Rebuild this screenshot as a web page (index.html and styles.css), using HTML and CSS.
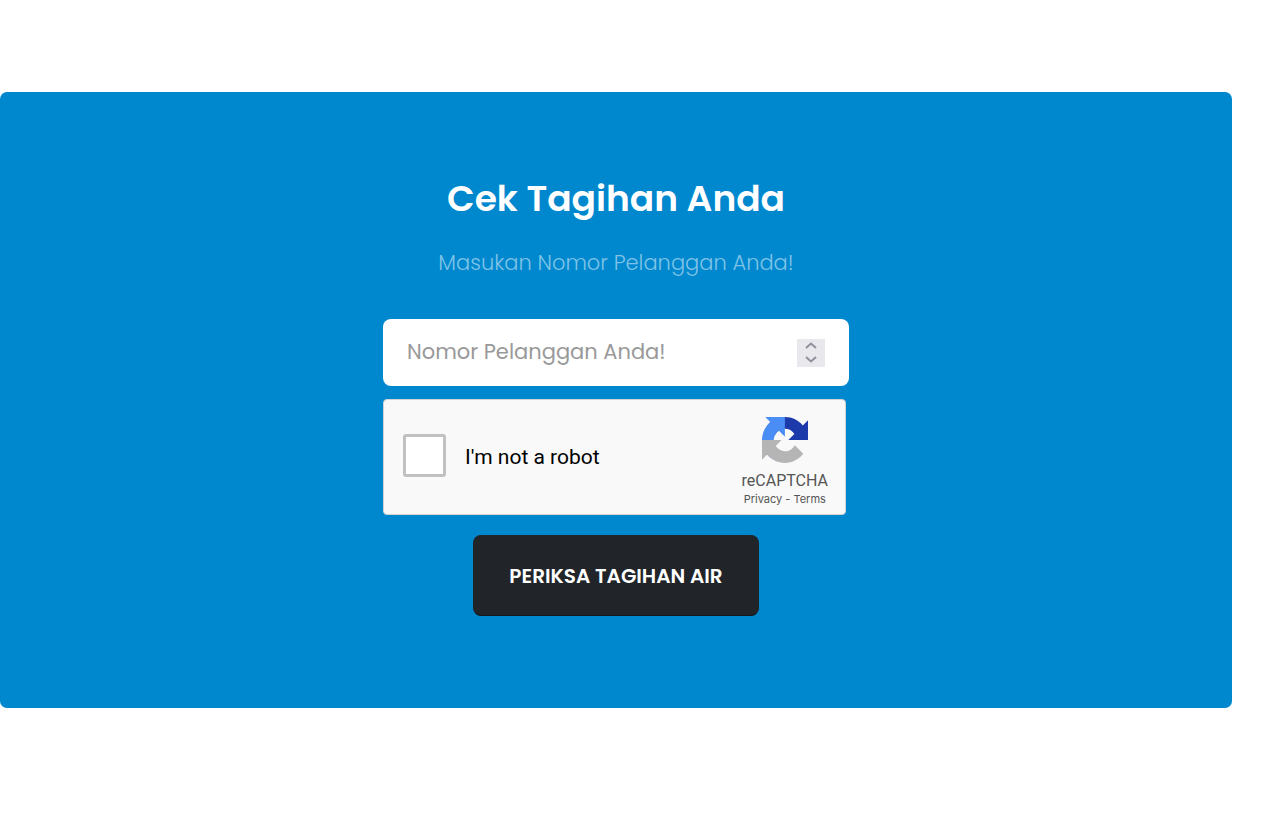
FILE: index.html
```html
<!DOCTYPE html>
<html lang="id">
<head>
<meta charset="utf-8">
<meta name="viewport" content="width=device-width, initial-scale=1">
<title>Cek Tagihan Anda</title>
<link rel="stylesheet" href="styles.css">
</head>
<body>
<main class="panel">
  <h1 class="title">Cek Tagihan Anda</h1>
  <p class="subtitle">Masukan Nomor Pelanggan Anda!</p>
  <form class="form">
    <div class="field">
      <input class="field-input" type="number" aria-label="Nomor Pelanggan" placeholder="Nomor Pelanggan Anda!">
      <div class="stepper">
        <button class="step" type="button" aria-label="Tambah"><svg width="12" height="7" viewBox="0 0 12 7"><path d="M1 6l5-4.500 5 4.500"/></svg></button>
        <button class="step" type="button" aria-label="Kurangi"><svg width="12" height="7" viewBox="0 0 12 7"><path d="M1 1l5 4.500 5-4.500"/></svg></button>
      </div>
    </div>
    <div class="captcha">
      <input class="captcha-box" type="checkbox" id="robot">
      <label class="captcha-label" for="robot">I'm not a robot</label>
      <div class="brand">
        <svg class="brand-logo" viewBox="0 0 64 64" aria-hidden="true">
          <path fill="#1c3aa9" d="M64 31.955l-.033-1.370V4.687l-7.160 7.160C50.948 4.674 42.033.093 32.050.093c-10.400 0-19.622 4.960-25.458 12.640l11.736 11.860a15.550 15.550 0 0 1 4.754-5.334c2.050-1.600 4.952-2.906 8.968-2.906.485 0 .860.057 1.135.163 4.976.393 9.288 3.140 11.828 7.124l-8.307 8.307L64 31.953"/>
          <path fill="#4a8df5" d="M31.862.094l-1.370.033H4.594l7.160 7.160C4.580 13.147 0 22.060 0 32.046c0 10.400 4.960 19.622 12.640 25.458L24.500 45.768a15.550 15.550 0 0 1-5.334-4.754c-1.600-2.050-2.906-4.952-2.906-8.968 0-.485.057-.860.163-1.135.393-4.976 3.140-9.288 7.124-11.828l8.307 8.307L31.860.095"/>
          <path fill="#b5b5b5" d="M.001 32.045l.033 1.370v25.898l7.160-7.160c5.860 7.173 14.774 11.754 24.760 11.754 10.400 0 19.622-4.960 25.458-12.640l-11.736-11.860a15.550 15.550 0 0 1-4.754 5.334c-2.050 1.600-4.952 2.906-8.968 2.906-.485 0-.860-.057-1.135-.163-4.976-.393-9.288-3.140-11.828-7.124l8.307-8.307c-10.522.040-22.400.066-27.295-.005"/>
        </svg>
        <span class="brand-name">reCAPTCHA</span>
        <span class="brand-links"><a href="#">Privacy</a> - <a href="#">Terms</a></span>
      </div>
    </div>
    <button class="submit" type="submit">PERIKSA TAGIHAN AIR</button>
  </form>
</main>
</body>
</html>
```
FILE: styles.css
```css
* { box-sizing: border-box; }
body {
  margin: 0;
  background: #fff;
  font-family: Poppins, Inter, sans-serif;
}
.panel {
  margin: 92px 48px 92px 0;
  padding: 80px 24px 92px;
  border-radius: 7px;
  background: #0088cf;
  color: #fff;
  text-align: center;
}
.title {
  margin: 0;
  font-size: 36px;
  line-height: 54px;
  font-weight: 600;
}
.subtitle {
  margin: 19px 0 39px;
  font-size: 21px;
  line-height: 35px;
  font-weight: 300;
  color: #7fc3e7;
}
.form {
  display: flex;
  flex-direction: column;
  align-items: center;
  width: 100%;
  max-width: 466px;
  margin: 0 auto;
}
.field {
  display: flex;
  align-items: center;
  width: 100%;
  height: 67px;
  padding: 0 24px;
  border-radius: 8px;
  background: #fff;
}
.field-input {
  flex: 1;
  min-width: 0;
  height: 100%;
  padding: 0 0 2px;
  border: 0;
  outline: 0;
  background: none;
  font: 400 21px Poppins, Inter, sans-serif;
  color: #444;
  appearance: textfield;
}
.field-input::-webkit-inner-spin-button { appearance: none; margin: 0; }
.field-input::placeholder { color: #999; opacity: 1; }
.stepper {
  display: flex;
  flex-direction: column;
  width: 28px;
  height: 28px;
  background: #e9e9ed;
}
.step {
  display: flex;
  flex: 1;
  align-items: center;
  justify-content: center;
  padding: 0;
  border: 0;
  background: none;
}
.step path { fill: none; stroke: #8f8f9d; stroke-width: 2; }
.captcha {
  display: flex;
  align-items: center;
  align-self: flex-start;
  width: calc(100% - 3px);
  height: 116px;
  margin: 13px 0 20px;
  padding: 0 17px 0 18px;
  border: 1px solid #d3d3d3;
  border-radius: 4px;
  background: #f9f9f9;
  font-family: Roboto, sans-serif;
  color: #555;
}
.captcha-box {
  flex: none;
  width: 43px;
  height: 43px;
  margin: 0 19px 4px 1px;
  appearance: none;
  border: 3px solid #c1c1c1;
  border-radius: 3px;
  background: #fff;
}
.captcha-label {
  flex: 1;
  text-align: left;
  font-size: 21px;
  color: #000;
}
.brand {
  display: flex;
  flex-direction: column;
  align-items: center;
  padding-top: 10px;
}
.brand-logo { width: 46px; height: 46px; }
.brand-name { margin-top: 8px; font-size: 16px; line-height: 19px; }
.brand-links { font-family: Inter, sans-serif; font-size: 11px; line-height: 18px; }
.brand-links a { color: inherit; text-decoration: none; }
.submit {
  height: 81px;
  padding: 0 35px;
  border: 1px solid #212529;
  border-bottom-color: #15181b;
  border-radius: 8px;
  background: #212529;
  color: #fff;
  font: 600 20px Poppins, Inter, sans-serif;
}
```
